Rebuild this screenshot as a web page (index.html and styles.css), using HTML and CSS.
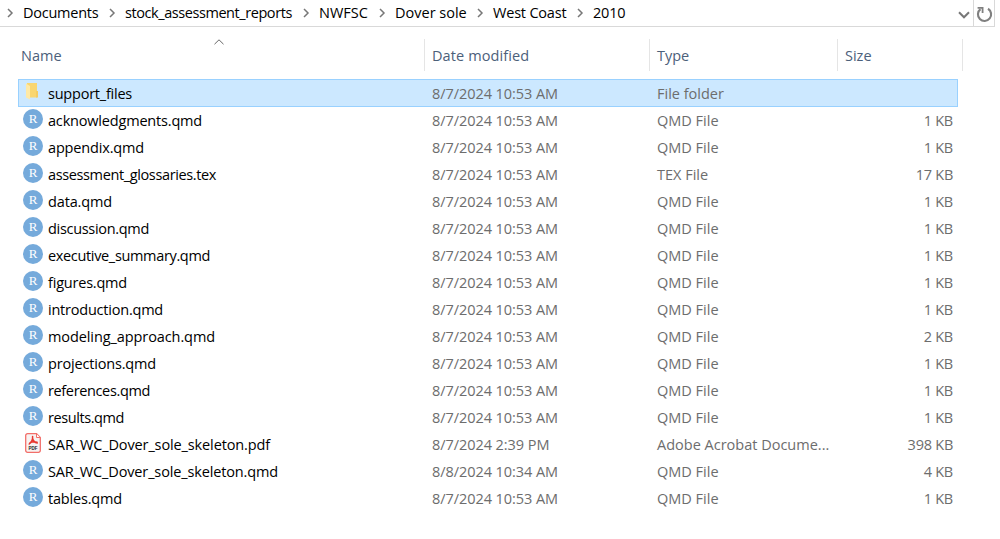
FILE: index.html
```html
<!DOCTYPE html>
<html lang="en">
<head>
<meta charset="utf-8">
<title>2010</title>
<link rel="stylesheet" href="styles.css">
</head>
<body>
<svg class="defs" aria-hidden="true">
  <symbol id="sep" viewBox="0 0 8 10"><path d="M2 1l4 4-4 4" fill="none" stroke="#777" stroke-width="1.5"/></symbol>
  <symbol id="pdf" viewBox="0 0 16 20">
    <path d="M2.500.7h9L15.300 4.500v13a1.800 1.800 0 0 1-1.800 1.800h-11A1.800 1.800 0 0 1 .7 17.500v-15A1.800 1.800 0 0 1 2.500.7z" fill="#f7f3f2" stroke="#f26f6a" stroke-width="1.300"/>
    <path d="M11.500 1v3.500H15" fill="#fff" stroke="#f26f6a"/>
    <path d="M7.600 3.500c.3 3-.9 5.500-3.400 7.500M7.600 5.500c.5 2.300 2.200 4 4.700 4.400M5 9.700c2-1 4.500-1.300 7-.5" fill="none" stroke="#e8382f" stroke-width="1.500" stroke-linecap="round"/>
  </symbol>
  <symbol id="folder" viewBox="0 0 12 17">
    <path d="M1 0h10v14.500H1z" fill="#f9d671"/>
    <path d="M0 .5l4 2.500v13.500L0 14.500z" fill="#ffe9a6"/>
    <path d="M10 8h2v6.500h-2z" fill="#f4cc64"/>
  </symbol>
</svg>
<header class="address">
  <nav class="crumbs">
    <svg class="sep"><use href="#sep"/></svg><span class="crumb documents">Documents</span>
    <svg class="sep"><use href="#sep"/></svg><span class="crumb reports">stock_assessment_reports</span>
    <svg class="sep"><use href="#sep"/></svg><span class="crumb center">NWFSC</span>
    <svg class="sep"><use href="#sep"/></svg><span class="crumb species">Dover sole</span>
    <svg class="sep"><use href="#sep"/></svg><span class="crumb region">West Coast</span>
    <svg class="sep"><use href="#sep"/></svg><span class="crumb year">2010</span>
  </nav>
  <svg class="drop" viewBox="0 0 12 8"><path d="M1 1.300l5 5 5-5" fill="none" stroke="#777" stroke-width="2"/></svg>
  <div class="refresh"><svg viewBox="0 0 16 16"><path d="M11.300 2.600a6.200 6.200 0 1 1-7.100.4" fill="none" stroke="#808080" stroke-width="2"/><path d="M1.500 1.800h4.700v4.700" fill="none" stroke="#808080" stroke-width="1.700"/></svg></div>
</header>
<main class="files">
  <div class="head">
    <div class="col name">Name<svg class="sort" viewBox="0 0 10 6"><path d="M.5 5.200L5 .8l4.500 4.400" fill="none" stroke="#666"/></svg></div>
    <div class="col date">Date modified</div>
    <div class="col type">Type</div>
    <div class="col size">Size</div>
  </div>
  <div class="rows" id="rows"></div>
</main>
<script src="files.js"></script>
</body>
</html>
```
FILE: styles.css
```css
* { box-sizing: border-box; }
body { margin: 0; width: 1000px; height: 539px; overflow: hidden; background: #fff; color: #000; font: 14.5px/20px "Open Sans", "Noto Sans", sans-serif; }
.defs { position: absolute; width: 0; height: 0; }
.address { display: flex; align-items: center; width: 995px; height: 27px; border-bottom: 1px solid #d9d9d9; border-right: 1px solid #d9d9d9; }
.crumbs { display: flex; align-items: center; flex: 1; padding-left: 6px; }
.sep { width: 8px; height: 10px; margin-right: 9px; flex: none; }
.crumb { white-space: nowrap; flex: none; }
.documents { width: 85px; letter-spacing: -.25px; }
.reports { width: 177px; letter-spacing: -.43px; }
.center { width: 59px; }
.species { width: 81px; }
.region { width: 83px; letter-spacing: -.2px; }
.year { letter-spacing: -.2px; }
.drop { width: 12px; height: 8px; margin: 4px 3px 0 0; }
.refresh { display: flex; align-items: center; justify-content: center; width: 21px; height: 26px; border-left: 1px solid #d9d9d9; }
.refresh svg { flex: none; width: 17px; height: 17px; margin: 2px 0 0 1px; }
.head { display: grid; grid-template-columns: 425px 225px 188px 125px; height: 32px; margin-top: 12px; color: #4c607a; }
.col { border-right: 1px solid #e5e5e5; padding: 7px 0 0 7px; }
.head .name { position: relative; padding-left: 21px; }
.head .date { letter-spacing: .1px; }
.sort { position: absolute; left: 214px; top: 0; width: 10px; height: 6px; }
.rows { margin: 9px 0 0 18px; width: 940px; }
.row { display: grid; grid-template-columns: 30px 384px 225px 190px 106px; height: 27px; align-items: center; color: #6d6d6d; white-space: nowrap; }
.selected { height: 28px; margin-top: -1px; padding-top: 2px; background: #cce8ff; box-shadow: inset 0 0 0 1px #99d1ff; }
.row .label { color: #000; }
.row .date { letter-spacing: -.06px; }
.row .bytes { text-align: right; letter-spacing: -.25px; }
.r-icon { width: 20px; height: 20px; margin: -3px 0 0 5px; border-radius: 50%; background: #75aadb; color: #fff; font: 13px/19px "Liberation Serif", serif; text-align: center; }
.pdf-icon { width: 16px; height: 20px; margin: -3px 0 0 7px; }
.pdf-icon text { font: bold 4.500px "Liberation Sans", sans-serif; fill: #222; }
.folder-icon { width: 12px; height: 17px; margin: -5px 0 0 8px; }
```
FILE: files.js
```js
const usual = "8/7/2024 10:53 AM";
// name, modified, type, size, width of the name in pixels
const files = [
  ["support_files", usual, "File folder", "", 84],
  ["acknowledgments.qmd", usual, "QMD File", "1 KB", 154],
  ["appendix.qmd", usual, "QMD File", "1 KB", 96],
  ["assessment_glossaries.tex", usual, "TEX File", "17 KB", 168],
  ["data.qmd", usual, "QMD File", "1 KB", 64],
  ["discussion.qmd", usual, "QMD File", "1 KB", 101],
  ["executive_summary.qmd", usual, "QMD File", "1 KB", 162],
  ["figures.qmd", usual, "QMD File", "1 KB", 79],
  ["introduction.qmd", usual, "QMD File", "1 KB", 115],
  ["modeling_approach.qmd", usual, "QMD File", "2 KB", 167],
  ["projections.qmd", usual, "QMD File", "1 KB", 108],
  ["references.qmd", usual, "QMD File", "1 KB", 102],
  ["results.qmd", usual, "QMD File", "1 KB", 76],
  ["SAR_WC_Dover_sole_skeleton.pdf", "8/7/2024 2:39 PM", "Adobe Acrobat Docume...", "398 KB", 222],
  ["SAR_WC_Dover_sole_skeleton.qmd", "8/8/2024 10:34 AM", "QMD File", "4 KB", 230],
  ["tables.qmd", usual, "QMD File", "1 KB", 74]
];
const ruler = document.createElement("canvas").getContext("2d");
ruler.font = '14.5px "Open Sans", "Noto Sans", sans-serif';
function tracking(name, width) {
  return ((width - ruler.measureText(name).width) / name.length).toFixed(3);
}
function icon(name) {
  if (name.endsWith(".pdf")) return '<svg class="pdf-icon" viewBox="0 0 16 20"><use href="#pdf"/><text x="3.5" y="16.5">PDF</text></svg>';
  if (!name.includes(".")) return '<svg class="folder-icon"><use href="#folder"/></svg>';
  return '<div class="r-icon">R</div>';
}
document.getElementById("rows").innerHTML = files.map(([name, date, type, size, width], i) =>
  `<div class="row${i === 0 ? " selected" : ""}">${icon(name)}<span class="label" style="letter-spacing:${tracking(name, width)}px">${name}</span><span class="date">${date}</span><span>${type}</span><span class="bytes">${size}</span></div>`
).join("");
```
